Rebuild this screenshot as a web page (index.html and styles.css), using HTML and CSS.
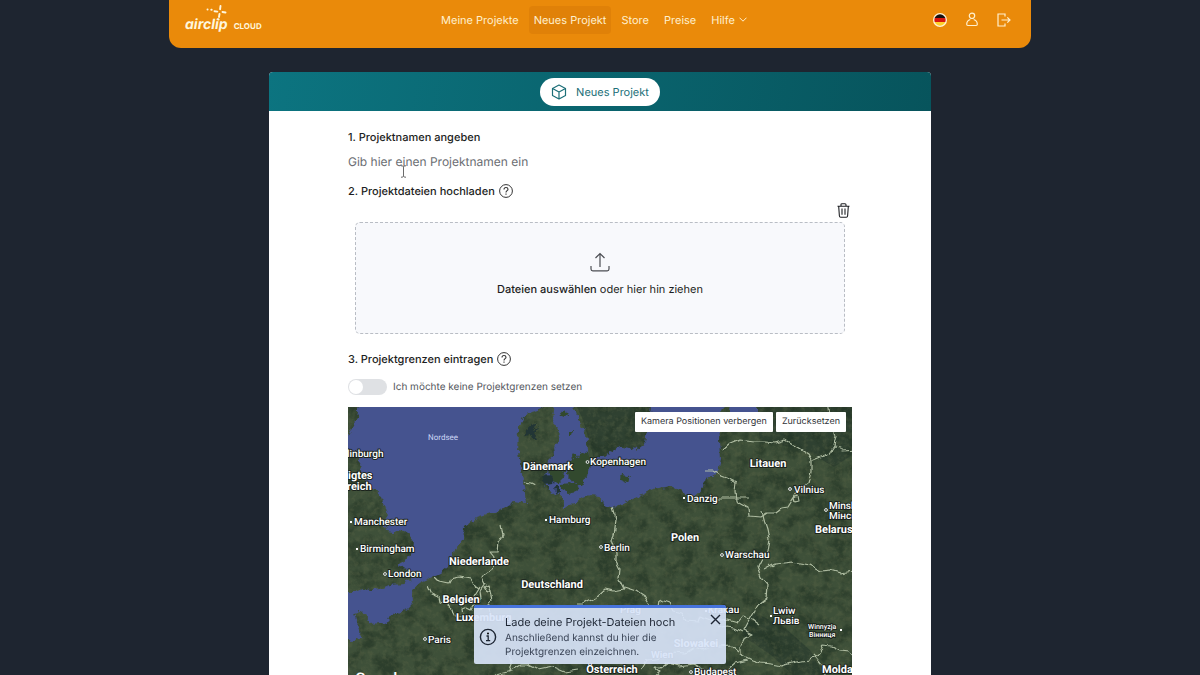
FILE: index.html
```html
<!DOCTYPE html>
<html lang="de">
<head>
<meta charset="utf-8">
<meta name="viewport" content="width=device-width, initial-scale=1">
<title>Neues Projekt – airclip cloud</title>
<link rel="stylesheet" href="styles.css">
</head>
<body>
<header class="topbar">
  <a class="logo" href="#" aria-label="airclip cloud">
    <span class="logo-word">airclip
      <svg class="logo-mark" viewBox="0 0 22 16" aria-hidden="true"><g fill="none" stroke="#fff6dc" stroke-width="1.9" stroke-linecap="round"><path d="M14.500 1l-.4 3.200M13.500 9l-.5 3M8.500 6.200l2.800.4M16.500 7l3 .5"/><path d="M1.500 4.500h.1M5.300 4.800h.4M12.600 14.500v.1"/></g></svg>
    </span>
    <span class="logo-cloud">CLOUD</span>
  </a>
  <nav class="nav">
    <a class="nav-item" href="#">Meine Projekte</a>
    <a class="nav-item active" href="#" aria-current="page">Neues Projekt</a>
    <a class="nav-item" href="#">Store</a>
    <a class="nav-item" href="#">Preise</a>
    <button class="nav-item" type="button">Hilfe
      <svg width="8" height="5" viewBox="0 0 8 5" aria-hidden="true"><path d="M.5.7L4 4.200 7.500.7" fill="none" stroke="currentColor"/></svg>
    </button>
  </nav>
  <div class="actions">
    <button class="icon-btn" type="button" aria-label="Sprache: Deutsch"><svg width="14" height="14" viewBox="0 0 14 14"><defs><clipPath id="round"><circle cx="7" cy="7" r="5.700"/></clipPath></defs><circle cx="7" cy="7" r="7" fill="#fff3d6"/><g clip-path="url(#round)"><path fill="#171010" d="M0 0h14v5H0z"/><path fill="#d8160f" d="M0 5h14v4H0z"/><path fill="#ffd02a" d="M0 9h14v5H0z"/></g></svg></button>
    <button class="icon-btn" type="button" aria-label="Konto"><svg width="12" height="15" viewBox="0 0 12 15"><g fill="none" stroke="#fff0cf" stroke-width="1.200" stroke-linejoin="round"><circle cx="6" cy="3.800" r="2.700"/><path d="M4.300 7.500C1.800 8.300.7 10 .7 12.300c0 .8.400 1.200 1.200 1.200h8.200c.8 0 1.200-.4 1.200-1.200 0-2.300-1.100-4-3.600-4.800"/></g></svg></button>
    <button class="icon-btn" type="button" aria-label="Abmelden"><svg width="14" height="14" viewBox="0 0 14 14"><path d="M8 3.500V1H1v12h7v-2.500M4.500 7H13M10.300 4.300L13 7l-2.700 2.700" fill="none" stroke="#fff0cf" stroke-width="1.200"/></svg></button>
  </div>
</header>

<main class="card">
  <div class="card-head">
    <h1 class="pill">
      <svg width="16" height="16" viewBox="0 0 16 16" aria-hidden="true"><path d="M8 1l6.500 3.500v7L8 15l-6.500-3.500v-7zM1.500 4.500L8 8l6.500-3.500M8 8v7" fill="none" stroke="currentColor" stroke-width="1.200" stroke-linejoin="round"/></svg>
      Neues Projekt
    </h1>
  </div>

  <form class="form">
    <div class="field">
      <label class="step" for="name">1. Projektnamen angeben</label>
      <input class="name-input" id="name" type="text" placeholder="Gib hier einen Projektnamen ein">
      <svg class="caret" width="7" height="13" viewBox="0 0 7 13" aria-hidden="true"><path d="M1 .8c1.500 0 2.500.3 2.500 1.500v8.400C3.500 12 2.500 12.200 1 12.200M6 .8C4.500.8 3.500 1.100 3.500 2.300M6 12.200c-1.500 0-2.500-.3-2.500-1.500" fill="none" stroke="#444" stroke-width=".8"/></svg>
    </div>

    <div class="step-row">
      <h2 class="step">2. Projektdateien hochladen</h2>
      <button class="icon-btn help" type="button" aria-label="Hilfe zu Projektdateien"><svg width="14" height="14" viewBox="0 0 14 14"><circle cx="7" cy="7" r="6.400" fill="none" stroke="currentColor"/><path d="M5 5.500C5 4.200 5.900 3.500 7 3.500s2 .7 2 1.800C9 6.700 7 6.700 7 8.400M7 9.600v1.200" fill="none" stroke="currentColor" stroke-width="1.100"/></svg></button>
    </div>
    <div class="trash-row">
      <button class="icon-btn" type="button" aria-label="Dateien löschen"><svg width="13" height="15" viewBox="0 0 13 15"><path d="M.5 3.200h12M4 3V1.800C4 1 4.400.7 5 .7h3c.6 0 1 .3 1 1.100V3M1.700 3.500l.7 9.500c.1.900.5 1.300 1.300 1.300h5.600c.8 0 1.200-.4 1.300-1.300l.7-9.500M5 5.500v6.200M8 5.500v6.200" fill="none" stroke="currentColor" stroke-width="1.100"/></svg></button>
    </div>
    <button class="dropzone" type="button">
      <svg width="20" height="20" viewBox="0 0 20 20" aria-hidden="true"><path d="M1 14v3c0 1.200.6 1.800 1.800 1.800h14.400c1.200 0 1.800-.6 1.800-1.800v-3M10 15V1.500M5.500 6L10 1.500 14.500 6" fill="none" stroke="currentColor" stroke-width="1.200"/></svg>
      <span><strong>Dateien auswählen</strong> oder hier hin ziehen</span>
    </button>

    <div class="step-row">
      <h2 class="step">3. Projektgrenzen eintragen</h2>
      <button class="icon-btn help" type="button" aria-label="Hilfe zu Projektgrenzen"><svg width="14" height="14" viewBox="0 0 14 14"><circle cx="7" cy="7" r="6.400" fill="none" stroke="currentColor"/><path d="M5 5.500C5 4.200 5.900 3.500 7 3.500s2 .7 2 1.800C9 6.700 7 6.700 7 8.400M7 9.600v1.200" fill="none" stroke="currentColor" stroke-width="1.100"/></svg></button>
    </div>
    <label class="switch-row"><input class="switch" type="checkbox">Ich möchte keine Projektgrenzen setzen</label>

    <section class="map" aria-label="Karte">
      <svg class="map-canvas" viewBox="0 0 504 268" preserveAspectRatio="xMidYMin slice">
        <defs>
          <filter id="patches" x="0" y="0" width="100%" height="100%" color-interpolation-filters="sRGB"><feTurbulence type="fractalNoise" baseFrequency=".06" numOctaves="5" seed="8"/><feColorMatrix values="0 0 0 0 .13  0 0 0 0 .20  0 0 0 0 .14  3.600 0 0 0 -1.500"/></filter>
          <filter id="fields" x="0" y="0" width="100%" height="100%" color-interpolation-filters="sRGB"><feTurbulence type="fractalNoise" baseFrequency=".2" numOctaves="4" seed="3"/><feColorMatrix values="0 0 0 0 .36  0 0 0 0 .40  0 0 0 0 .28  0 3 0 0 -1.300"/></filter>
          <filter id="rough" x="-5%" y="-5%" width="110%" height="110%"><feTurbulence type="fractalNoise" baseFrequency=".16" numOctaves="3" seed="5"/><feDisplacementMap in="SourceGraphic" scale="7" xChannelSelector="R" yChannelSelector="G"/></filter>
          <filter id="wobble" x="-5%" y="-5%" width="110%" height="110%"><feTurbulence type="fractalNoise" baseFrequency=".12" numOctaves="1" seed="5"/><feDisplacementMap in="SourceGraphic" scale="7" xChannelSelector="R" yChannelSelector="G"/></filter>
        </defs>
        <rect width="504" height="268" fill="#3e5039"/>
        <path fill="#293b2e" opacity=".7" d="M229 0h78l-5 36-10 9-30 5-16 6-2-13-9-30zM409 0h95v48l-18 12-20-12-22-8-32-5zM405 205l30 14 28 25 12 24h-30l-22-20-30-20z"/>
        <rect width="504" height="268" filter="url(#patches)" opacity=".6"/>
        <rect width="504" height="268" filter="url(#fields)" opacity=".35"/>
        <g filter="url(#rough)">
        <g fill="#45538f">
          <path d="M12 -6L9 9 7 17 2 26 -6 30V44l13 1 5 8-1 6 4 7 5 11 6 6 8 7 3 8 3 10-5 8 4 9 6 1 3-3 8 1 6 4 4 8-1 8-7 10-9 5 9 3 7 5-1 6-9 4-13 1-9 4-10 1-8-1-7 3-15 0v48l13 1 8-3-3-7-5-17 6-2 7 3 3 9 10-1 7 1 3-7 17-7 6-6-1-14 8-7 9-4 11-5 8-7 7-17 8-12 2-11 9-8 18-6 10-3 13-8 11 2-1-10-3-20-4-21 1-23 4-13 8-5 10-3 4-14z"/>
          <path d="M207 -6l-2 19 4 10 3 11-6 6 1 7-7 6-1 13-5 5 5 6 4 10 8-1 4 5 0 10 11-4 7-6 9-3 10 1 5 9 8 3 19-9 20-10 20-3 9 5 5 5 9-1 7-5 3-10 13-8 3-12-1-22-2-20 8-19h-73l-3 21-4 22-10 8-12-3-5 0-13 8-17 6-1-12-2-14-8-17-6-19z"/>
          <path d="M382 -6h27v16l-12 2-17 3z"/>
        </g>
        <g fill="#33482f">
          <path d="M220 57l5-9 5 2 3-6 7 1 2 10-1 11-5 4-2 8-8-1-3-6-5-5zM200 61l9-1 7 3-1 9-5 5-8-5zM213 77l9-1 9 3-2 5-9 2-7-4zM273 67l7 1 2 5-3 3-7-3zM213 6l5-2 1 4-4 2zM221 24l4 0-1 3-3 0zM228 74l6-1 2 4-5 1z"/>
        </g>
        <path fill="#203434" d="M178 23l5-4 6-3-4 7 6-2-5 6 3 6-6 0-3-7-4 3zM193 70l8-2 5 5-2 4-6 1zM206 78l5 0 0 6-4 1z"/>
        </g>
        <g filter="url(#wobble)" fill="none" stroke="#bcc9ae" stroke-width="1.200" stroke-linejoin="round" opacity=".9">
          <path d="M176 75l7 1 6 3M153 119l2 9-5 8-1 9-6 0 4 5-3 12-7 5-3 4 3 6-5 7 1 8-6 2-1-5 5-8-6-4-3-5-10-2-10 2-2 4-9-2-4-4M80 178l4 9 7 3 1 5 8 3 5 4 2 7 8 0-1-7 5-2 4 2 2-4 7 4 6-3"/>
          <path d="M136 181l4-2 2 5-3 2zM142 184l2 9-4 8 6 8"/>
          <path d="M265 101l3 10-1 12-3 11 4 12 0 8 4 8-1 10 5 10-10 2-9-2-10 9-11 6-8 0M276 180l12 4 9 6 5 8 9 2 1-7 9 3 4 8 9 2 5 8 12 1 2-6 13 5 13-2 11 3 4-5 11 3 7 5"/>
          <path d="M375 43l7-6 10-4 14 2 10 0 11 1 10-3 12 7 11 7 4 7 0 11-3 11-9 6-7 10-5 8-6 1-6 5-9 0-6 4-12-1-1-9-11-6-1-9 1-9-10-5-8-3-6-4-7 0M370 91h32M463 54l10-4 7-2 6-9 7 1 3 4 14-1M486 39l2-10-4-16-3-4-2-15M446 91l4-2 1 5-4 1z"/>
          <path d="M414 103l2 10 3 9 2 10-2 13-6 8-3 6 4 11 6 7-1 14-9 7-7 12-7 13 8 4-7 3-5 10 0 7 12 6 9 3 10 1 11 2 13-4 14-2 9-7 5-7 9 1 8 4 8 1 7 6 17 0M416 163l11-6 18-2 17 3 11 6 10-1 10 3 17-3M465 246l9 11 5 18"/>
          <path d="M395 225l-8-4-8-1-8 2M390 245l-7-6-12 1-9-3-6 6-10-3-9 6-12-1-10 6-16 2-5 9M400 253l-12 3-9 8-14 0-10-2-9-5-15 2-11-3-7 5-6 0 5 4-7 6M148 268l15-4 10-6 7 0 10 5 15-3 12 5 13-2M160 248l3 8-2 8"/>
        </g>
        <g class="labels">
          <text x="95" y="33" class="sea" text-anchor="middle">Nordsee</text>
          <g class="country">
            <text x="200" y="63" text-anchor="middle">Dänemark</text>
            <text x="0" y="72">igtes</text><text x="-1" y="83">reich</text>
            <text x="420" y="60" text-anchor="middle">Litauen</text>
            <text x="337" y="134" text-anchor="middle">Polen</text>
            <text x="131" y="158" text-anchor="middle">Niederlande</text>
            <text x="204" y="181" text-anchor="middle">Deutschland</text>
            <text x="113" y="196" text-anchor="middle">Belgien</text>
            <text x="108" y="214">Luxemburg</text>
            <text x="348" y="240" text-anchor="middle">Slowakei</text>
            <text x="264" y="266" text-anchor="middle">Österreich</text>
            <text x="467" y="126">Belarus</text>
            <text x="474" y="266">Moldau</text>
          </g>
          <g class="city">
            <text x="-1" y="50">linburgh</text>
            <text x="6" y="118">Manchester</text>
            <text x="12" y="145">Birmingham</text>
            <text x="40" y="170">London</text>
            <text x="80" y="236">Paris</text>
            <text x="201" y="116">Hamburg</text>
            <text x="242" y="58">Kopenhagen</text>
            <text x="256" y="144">Berlin</text>
            <text x="339" y="95">Danzig</text>
            <text x="446" y="86">Vilnius</text>
            <text x="377" y="151">Warschau</text>
            <text x="481" y="102">Minsk</text><text x="481" y="112">Мінск</text>
            <text x="272" y="206">Prag</text>
            <text x="360" y="206">Krakau</text>
            <text x="303" y="251">Wien</text>
            <text x="425" y="207">Lwiw</text><text x="425" y="217">Львів</text>
            <text x="346" y="268">Budapest</text>
          </g>
          <g class="town"><text x="460" y="222">Winnyzja</text><text x="461" y="230">Вінниця</text></g>
          <text x="7" y="277" class="brand">Google</text>
        </g>
        <g fill="#fff"><path d="M2 114h2v2H2zM8 141h2v2H8zM197 112h2v2h-2zM335 90h2v2h-2zM422 208h2v2h-2zM492 222h2v2h-2zM357 203h2v2h-2z"/></g>
        <g fill="#26352b" stroke="#fff" stroke-width=".9"><circle cx="37" cy="167" r="1.400"/><circle cx="77" cy="232" r="1.400"/><circle cx="239.500" cy="55" r="1.400"/><circle cx="253" cy="140" r="1.400"/><circle cx="442" cy="82" r="1.400"/><circle cx="374" cy="148" r="1.400"/><circle cx="478" cy="103" r="1.400"/><circle cx="343" cy="265" r="1.400"/></g>
      </svg>
      <div class="map-tools">
        <button class="map-btn" type="button">Kamera Positionen verbergen</button>
        <button class="map-btn" type="button">Zurücksetzen</button>
      </div>
    </section>
  </form>
</main>

<aside class="toast" role="status">
  <svg class="toast-icon" width="18" height="18" viewBox="0 0 18 18" aria-hidden="true"><circle cx="9" cy="9" r="7.600" fill="none" stroke="currentColor" stroke-width="1.400"/><path d="M7.500 8h1.700v4.500M7 12.600h4.200" fill="none" stroke="currentColor" stroke-width="1.300"/><circle cx="9" cy="5.400" r="1"/></svg>
  <div>
    <h3 class="toast-title">Lade deine Projekt-Dateien hoch</h3>
    <p class="toast-text">Anschließend kannst du hier die Projektgrenzen einzeichnen.</p>
  </div>
  <button class="icon-btn toast-close" type="button" aria-label="Schließen"><svg width="11" height="11" viewBox="0 0 11 11"><path d="M1 1l9 9M10 1l-9 9" stroke="currentColor" stroke-width="1.400"/></svg></button>
</aside>
</body>
</html>
```

FILE: styles.css
```css
* { box-sizing: border-box; }

body {
  margin: 0;
  height: 100vh;
  overflow: hidden;
  display: flex;
  flex-direction: column;
  align-items: center;
  background: #1e2530;
  color: #1c1e22;
  font-family: Inter, "Liberation Sans", sans-serif;
  font-size: 11px;
  text-rendering: geometricPrecision;
}

button, input { font: inherit; color: inherit; text-rendering: inherit; }
h1, h2, h3, p { margin: 0; font-weight: 400; }
svg { display: block; flex: none; }

.icon-btn {
  display: flex;
  padding: 0;
  border: 0;
  background: none;
  cursor: pointer;
}

/* Top bar */
.topbar {
  width: 100%;
  max-width: 862px;
  display: grid;
  grid-template-columns: 1fr auto 1fr;
  align-items: center;
  padding: 5px 20px 14px 16px;
  border-radius: 0 0 12px 12px;
  background: #ea8a0a;
  color: #fff0cf;
}

.logo {
  display: flex;
  align-items: baseline;
  gap: 6px;
  padding-top: 12px;
  line-height: 16px;
  color: #fff6dc;
  text-decoration: none;
}

.logo-word {
  position: relative;
  font-size: 14px;
  font-weight: 700;
  font-style: italic;
}

.logo-mark {
  position: absolute;
  right: 0;
  top: -12px;
  width: 22px;
}

.logo-cloud { font-size: 8px; font-weight: 700; }

.nav { display: flex; gap: 5px; margin-right: 8px; }

.nav-item {
  display: flex;
  align-items: center;
  gap: 4px;
  padding: 0 5px;
  border: 0;
  border-radius: 4px;
  background: none;
  color: inherit;
  line-height: 28px;
  text-decoration: none;
}

.nav-item.active { background: #e08108; }

.actions {
  display: flex;
  justify-content: flex-end;
  align-items: center;
  gap: 19px;
}

/* Project card */
.card {
  flex: 1;
  min-height: 0;
  width: 100%;
  max-width: 662px;
  margin-top: 24px;
  display: flex;
  flex-direction: column;
  border-radius: 4px 4px 0 0;
  overflow: hidden;
  background: #fff;
}

.card-head {
  display: flex;
  justify-content: center;
  padding: 6px 0 5px;
  background: linear-gradient(100deg, #0c7480, #07545c);
}

.pill {
  display: flex;
  align-items: center;
  gap: 9px;
  padding: 0 11px;
  border-radius: 14px;
  background: #fff;
  color: #1c6f78;
  font-size: 11px;
  line-height: 28px;
}

.form {
  flex: 1;
  min-height: 0;
  display: flex;
  flex-direction: column;
  padding: 16px 79px 0;
}

.field {
  position: relative;
  display: flex;
  flex-direction: column;
  margin-bottom: 6px;
}

.step {
  font-size: 11px;
  font-weight: 500;
  line-height: 20px;
}

.step-row { display: flex; align-items: center; gap: 4px; }
.help { color: #333; }

.name-input {
  width: 100%;
  height: 28px;
  padding: 0;
  border: 0;
  outline: 0;
  background: none;
  font-size: 12px;
}

.name-input::placeholder { color: #6b6e73; opacity: 1; }

.caret { position: absolute; left: 52px; top: 38px; }

.trash-row {
  display: flex;
  justify-content: flex-end;
  padding: 2px 2px 4px 0;
}

.dropzone {
  display: flex;
  flex-direction: column;
  align-items: center;
  gap: 8px;
  margin: 0 7px 15px;
  padding: 29px 16px 35px;
  border: 1px dashed #b9bdc4;
  border-radius: 5px;
  background: #f8f9fc;
  line-height: 18px;
}

.dropzone strong { font-weight: 500; }
.dropzone svg { color: #4b4d52; }

.switch-row {
  display: flex;
  align-items: center;
  gap: 6px;
  margin: 10px 0 12px;
  color: #53565c;
  font-size: 10px;
  line-height: 16px;
}

.switch {
  appearance: none;
  width: 39px;
  height: 16px;
  margin: 0;
  padding: 1px;
  border-radius: 8px;
  background: #dfe1e4;
}

.switch::before {
  content: "";
  display: block;
  width: 14px;
  height: 14px;
  border-radius: 50%;
  background: #fff;
}

.switch:checked::before { margin-left: auto; }

/* Map */
.map {
  position: relative;
  flex: 1;
  min-height: 0;
  overflow: hidden;
  background: #3b4e37;
}

.map-canvas { width: 100%; height: 100%; }

.labels {
  font-family: Roboto, "Liberation Sans", sans-serif;
  font-weight: 500;
  fill: #fff;
  stroke: #1b241d;
  stroke-width: 2px;
  stroke-linejoin: round;
  paint-order: stroke;
}

.country { font-size: 11px; font-weight: 700; }
.city { font-size: 10px; }
.town { font-size: 7px; }
.sea { font-size: 8px; font-weight: 400; fill: #ccd6f5; stroke: none; }
.brand { font-size: 16px; stroke: none; }

.map-tools {
  position: absolute;
  top: 5px;
  right: 6px;
  display: flex;
  gap: 3px;
}

.map-btn {
  padding: 0 6px;
  border: 0;
  border-radius: 1px;
  background: #fff;
  color: #303236;
  font-size: 9px;
  line-height: 20px;
}

/* Notification */
.toast {
  position: fixed;
  left: 50%;
  bottom: 11px;
  width: 252px;
  margin-left: -126px;
  display: flex;
  align-items: center;
  gap: 8px;
  padding: 6px 5px 5px;
  border-top: 3px solid #4673dc;
  border-radius: 2px;
  background: rgba(216, 228, 249, .92);
  color: #1d2533;
}

.toast-title { font-size: 11px; line-height: 17px; }
.toast-text { font-size: 10px; line-height: 14px; color: #3a4456; }
.toast-close { margin-left: auto; align-self: flex-start; }
```
